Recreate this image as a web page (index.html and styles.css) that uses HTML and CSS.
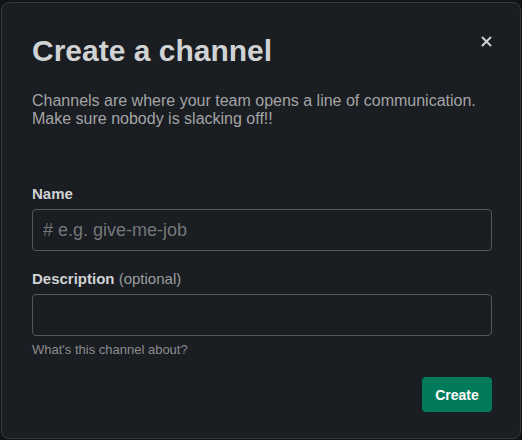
FILE: index.html
```html
<!DOCTYPE html>
<html>
<head>
<meta charset="utf-8">
<link rel="stylesheet" href="styles.css">
</head>
<body>
<div class="modal">
  <div class="header">
    <h1 class="title">Create a channel</h1>
    <button class="close" aria-label="Close">
      <svg width="11" height="11" viewBox="0 0 11 11"><path d="M1.5 1.5L9.5 9.5M9.5 1.5L1.5 9.5" stroke="#d1d2d3" stroke-width="2" stroke-linecap="round"/></svg>
    </button>
  </div>
  <p class="intro">Channels are where your team opens a line of communication.<br>Make sure nobody is slacking off!!</p>
  <div class="field name-field">
    <label class="label">Name</label>
    <div class="input"><span class="placeholder"># e.g. give-me-job</span></div>
  </div>
  <div class="field">
    <label class="label">Description <span class="optional">(optional)</span></label>
    <div class="input"></div>
    <div class="hint">What's this channel about?</div>
  </div>
  <div class="footer">
    <button class="create">Create</button>
  </div>
</div>
</body>
</html>
```
FILE: styles.css
```css
html, body {
  margin: 0;
  padding: 0;
  background: #121316;
  height: 100%;
}
body {
  padding: 2px 1px 1px 1px;
  box-sizing: border-box;
  font-family: "Liberation Sans", Arial, sans-serif;
}
.modal {
  box-sizing: border-box;
  height: 437px;
  background: #1a1d21;
  border: 1px solid #36383c;
  border-radius: 8px;
  padding: 0 28px 0 30px;
  display: flex;
  flex-direction: column;
}
.header {
  display: flex;
  justify-content: space-between;
  align-items: flex-start;
  padding-top: 29px;
}
.title {
  margin: 0;
  font-size: 30px;
  font-weight: bold;
  color: #d1d2d3;
  line-height: 38px;
}
.close {
  background: none;
  border: none;
  padding: 0;
  margin: 4px 0 0 0;
  width: 11px;
  height: 11px;
  display: flex;
  align-items: center;
  justify-content: center;
}
.intro {
  margin: 22px 0 0 0;
  font-size: 16px;
  line-height: 18px;
  color: #a3a4a6;
}
.field {
  display: flex;
  flex-direction: column;
}
.name-field {
  margin-top: 56px;
}
.label {
  font-size: 15px;
  font-weight: bold;
  color: #d1d2d3;
  line-height: 20px;
  margin-bottom: 5px;
}
.optional {
  font-weight: normal;
  color: #9b9c9e;
}
.input {
  box-sizing: border-box;
  height: 42px;
  border: 1px solid #55575b;
  border-radius: 4px;
  padding: 0 10px;
  display: flex;
  align-items: center;
}
.placeholder {
  font-size: 18px;
  color: #75777a;
}
.name-field .input {
  margin-bottom: 18px;
}
.hint {
  margin-top: 6px;
  font-size: 13px;
  color: #8b8c8e;
  line-height: 16px;
}
.footer {
  display: flex;
  justify-content: flex-end;
  margin-top: 19px;
}
.create {
  background: #007a5a;
  color: #ffffff;
  border: none;
  border-radius: 4px;
  height: 35px;
  width: 70px;
  font-family: "Liberation Sans", Arial, sans-serif;
  font-weight: bold;
  font-size: 14px;
  padding: 0;
}
```
